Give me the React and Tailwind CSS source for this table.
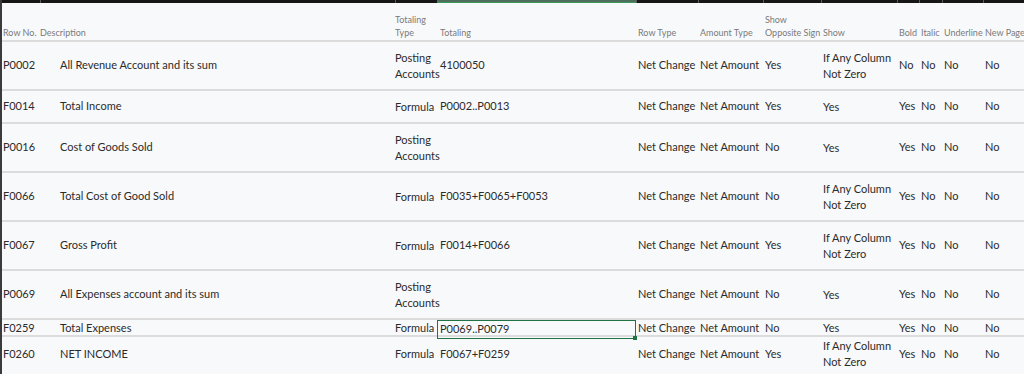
import React from "react";

const cols = "grid-cols-[38px_355px_42px_199px_62px_65px_58px_76px_22px_23px_41px_41px]";

const rows = [
  { no: "P0002", desc: "All Revenue Account and its sum", tt: ["Posting", "Accounts"], tot: "4100050", opp: "Yes", show: ["If Any Column", "Not Zero"], bold: "No", h: "h-[49px]" },
  { no: "F0014", desc: "Total Income", tt: ["Formula"], tot: "P0002..P0013", opp: "Yes", show: ["Yes"], bold: "Yes", h: "h-[33px]" },
  { no: "P0016", desc: "Cost of Goods Sold", tt: ["Posting", "Accounts"], tot: "", opp: "No", show: ["Yes"], bold: "Yes", h: "h-[49px]" },
  { no: "F0066", desc: "Total Cost of Good Sold", tt: ["Formula"], tot: "F0035+F0065+F0053", opp: "No", show: ["If Any Column", "Not Zero"], bold: "Yes", h: "h-[49px]" },
  { no: "F0067", desc: "Gross Profit", tt: ["Formula"], tot: "F0014+F0066", opp: "Yes", show: ["If Any Column", "Not Zero"], bold: "Yes", h: "h-[49px]" },
  { no: "P0069", desc: "All Expenses account and its sum", tt: ["Posting", "Accounts"], tot: "", opp: "No", show: ["Yes"], bold: "Yes", h: "h-[49px]" },
  { no: "F0259", desc: "Total Expenses", tt: ["Formula"], tot: "P0069..P0079", opp: "No", show: ["Yes"], bold: "Yes", h: "h-[17px]", selected: true },
  { no: "F0260", desc: "NET INCOME", tt: ["Formula"], tot: "F0067+F0259", opp: "Yes", show: ["If Any Column", "Not Zero"], bold: "Yes", h: "h-[34px]", last: true },
];

const Lines = ({ items }) => (
  <div className="flex flex-col leading-[16px]">
    {items.map((t) => (
      <span key={t} className="whitespace-nowrap">{t}</span>
    ))}
  </div>
);

const Cell = ({ className = "", children }) => (
  <div className={`flex items-center whitespace-nowrap ${className}`}>{children}</div>
);

export default function App() {
  return (
    <div
      className="w-[1024px] h-[374px] overflow-hidden bg-[#f8f9fa] border-l-2 border-[#3b3b3b] text-[#2b2b2b]"
      style={{ fontFamily: 'Lato, "Open Sans", sans-serif' }}
    >
      {/* top bar */}
      <div className={`grid ${cols} h-[3px] bg-[#161616]`}>
        {Array.from({ length: 12 }).map((_, i) => (
          <div
            key={i}
            className={
              i === 3
                ? "bg-[#4f6f5c] border-b border-[#3a9a5e] border-l border-l-[#6a6a6a]"
                : i === 0
                ? ""
                : "border-l border-[#5a5a5a]"
            }
          />
        ))}
      </div>

      {/* header */}
      <div className={`grid ${cols} h-[39px] border-b-2 border-[#dcdcdc] text-[9px] text-[#7a7a7a] leading-[13px] pb-[1px]`}>
        <Cell className="items-end pl-[1px]">Row No.</Cell>
        <Cell className="items-end">Description</Cell>
        <Cell className="items-end">
          <div className="flex flex-col">
            <span>Totaling</span>
            <span>Type</span>
          </div>
        </Cell>
        <Cell className="items-end pl-[3px]">Totaling</Cell>
        <Cell className="items-end pl-[2px]">Row Type</Cell>
        <Cell className="items-end pl-[2px]">Amount Type</Cell>
        <Cell className="items-end pl-[2px]">
          <div className="flex flex-col">
            <span>Show</span>
            <span>Opposite Sign</span>
          </div>
        </Cell>
        <Cell className="items-end pl-[2px]">Show</Cell>
        <Cell className="items-end pl-[2px]">Bold</Cell>
        <Cell className="items-end pl-[2px]">Italic</Cell>
        <Cell className="items-end pl-[2px]">Underline</Cell>
        <Cell className="items-end pl-[2px]">New Page</Cell>
      </div>

      {/* rows */}
      {rows.map((r) => (
        <div
          key={r.no}
          className={`relative grid ${cols} ${r.h} text-[11px] ${r.last ? "" : "border-b-2 border-[#dcdcdc]"}`}
        >
          {r.selected && (
            <span className="absolute -left-[2px] top-0 bottom-[-2px] w-[2px] bg-[#2e8b57]" />
          )}
          <Cell className="pl-[1px]">{r.no}</Cell>
          <Cell className="pl-[20px]">{r.desc}</Cell>
          <Cell>
            <Lines items={r.tt} />
          </Cell>
          <Cell
            className={
              r.selected
                ? "relative pl-[2px] -mb-[2px] border border-[#217346]"
                : "pl-[3px]"
            }
          >
            {r.tot}
            {r.selected && (
              <span className="absolute -right-[2px] -bottom-[2px] w-[4px] h-[4px] bg-[#217346]" />
            )}
          </Cell>
          <Cell className="pl-[2px]">Net Change</Cell>
          <Cell className="pl-[2px]">Net Amount</Cell>
          <Cell className="pl-[2px]">{r.opp}</Cell>
          <Cell className="pl-[2px]">
            <Lines items={r.show} />
          </Cell>
          <Cell className="pl-[2px]">{r.bold}</Cell>
          <Cell className="pl-[2px]">No</Cell>
          <Cell className="pl-[2px]">No</Cell>
          <Cell className="pl-[2px]">No</Cell>
        </div>
      ))}
    </div>
  );
}
